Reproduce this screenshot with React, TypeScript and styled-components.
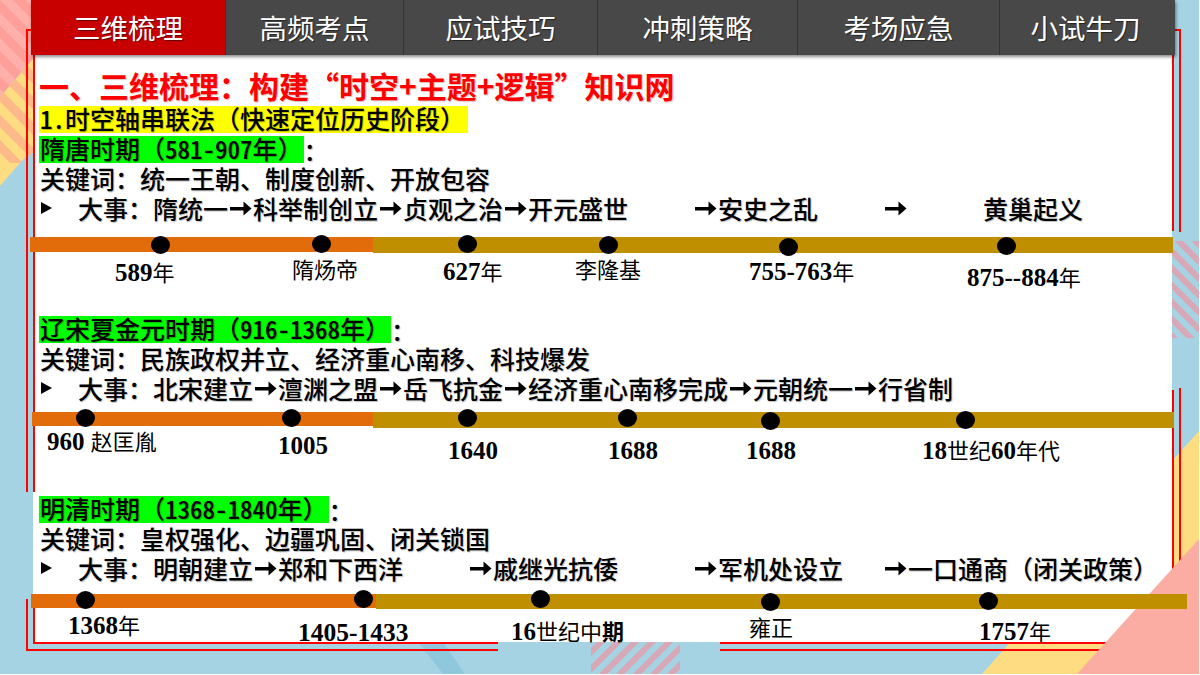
import React from "react"
import styled, { createGlobalStyle } from "styled-components"

const serifStack = `"Liberation Serif", "Noto Sans CJK SC", serif`
const sansStack = `"Noto Sans CJK SC", "Noto Sans", sans-serif`

const tabs = [
  { name: "三维梳理", width: 195, active: true },
  { name: "高频考点", width: 178 },
  { name: "应试技巧", width: 194 },
  { name: "冲刺策略", width: 200 },
  { name: "考场应急", width: 202 },
  { name: "小试牛刀", width: 175 },
]

const periods = [
  {
    heading: "隋唐时期（581-907年）",
    keywords: "关键词：统一王朝、制度创新、开放包容",
    steps: [
      { text: "隋统一", first: true },
      { text: "科举制创立" },
      { text: "贞观之治" },
      { text: "开元盛世" },
      { text: "安史之乱", before: 65 },
      { text: "黄巢起义", before: 65, after: 75 },
    ],
    track: { start: 30, orange: 343, orangeHeight: 15, gold: 800, goldHeight: 16 },
    spaceAbove: 12,
    height: 79,
    dots: [[160, 8], [321, 7], [467, 7], [608, 8], [788, 10], [1006, 9]],
    labels: [
      { x: 115, y: 36, node: <><Num>589</Num>年</> },
      { x: 292, y: 34, node: <>隋炀帝</> },
      { x: 443, y: 35, node: <><Num>627</Num>年</> },
      { x: 575, y: 34, node: <>李隆基</> },
      { x: 749, y: 35, node: <><Num>755-763</Num>年</> },
      { x: 967, y: 41, node: <><Num>875--884</Num>年</> },
    ],
  },
  {
    heading: "辽宋夏金元时期（916-1368年）",
    keywords: "关键词：民族政权并立、经济重心南移、科技爆发",
    steps: [
      { text: "北宋建立", first: true },
      { text: "澶渊之盟" },
      { text: "岳飞抗金" },
      { text: "经济重心南移完成" },
      { text: "元朝统一" },
      { text: "行省制" },
    ],
    track: { start: 32, orange: 341, orangeHeight: 14, gold: 801, goldHeight: 16 },
    spaceAbove: 7,
    height: 84,
    dots: [[85, 6], [291, 6], [467, 6], [627, 6], [770, 9], [965, 8]],
    labels: [
      { x: 47, y: 30, node: <><Num>960 </Num>赵匡胤</> },
      { x: 278, y: 34, node: <Num>1005</Num> },
      { x: 448, y: 39, node: <Num>1640</Num> },
      { x: 608, y: 39, node: <Num>1688</Num> },
      { x: 746, y: 39, node: <Num>1688</Num> },
      { x: 922, y: 39, node: <><Num>18</Num>世纪<Num>60</Num>年代</> },
    ],
  },
  {
    heading: "明清时期（1368-1840年）",
    keywords: "关键词：皇权强化、边疆巩固、闭关锁国",
    steps: [
      { text: "明朝建立", first: true },
      { text: "郑和下西洋" },
      { text: "戚继光抗倭", before: 65 },
      { text: "军机处设立", before: 75 },
      { text: "一口通商（闭关政策）", before: 40 },
    ],
    track: { start: 31, orange: 345, orangeHeight: 14, gold: 811, goldHeight: 15 },
    spaceAbove: 9,
    height: 60,
    dots: [[85, 6], [363, 5], [540, 5], [770, 8], [988, 7]],
    labels: [
      { x: 68, y: 32, node: <><Num>1368</Num>年</> },
      { x: 298, y: 39, node: <Num $size={25.5}>1405-1433</Num> },
      { x: 511, y: 38, node: <><Num>16</Num>世纪中<Num $size={22}>期</Num></> },
      { x: 749, y: 35, node: <>雍正</> },
      { x: 979, y: 38, node: <><Num>1757</Num>年</> },
    ],
  },
]

const frameLines = [
  // inner frame
  { x: 33, y: 29, w: 2, h: 463 },
  { x: 33, y: 598, w: 2, h: 45 },
  { x: 33, y: 642, w: 465, h: 2 },
  { x: 720, y: 642, w: 390, h: 2 },
  { x: 1172, y: 29, w: 2, h: 202 },
  { x: 1172, y: 390, w: 2, h: 190 },
  // outer frame
  { x: 26, y: 29, w: 2, h: 463 },
  { x: 26, y: 599, w: 2, h: 52 },
  { x: 26, y: 649, w: 472, h: 2 },
  { x: 720, y: 649, w: 385, h: 2 },
  { x: 26, y: 29, w: 1155, h: 2 },
  { x: 1179, y: 29, w: 2, h: 203 },
  { x: 1179, y: 388, w: 2, h: 175 },
]

// digits and the dot sit in half-width cells, the punctuation stays full width
const withHalfDigits = (text: string) =>
  text.split(/([0-9.\-]+)/).map((part, i) => (i % 2 ? <Half key={i}>{part}</Half> : part))

const Backdrop = () => (
  <BackdropSvg viewBox="0 0 1199 674">
    <defs>
      <pattern id="pinkStripes" width="18" height="18" patternUnits="userSpaceOnUse" patternTransform="rotate(-45)">
        <rect width="9" height="18" fill="#ffb0aa" />
      </pattern>
      <pattern id="amberStripes" width="18" height="18" patternUnits="userSpaceOnUse" patternTransform="rotate(-45)">
        <rect width="9" height="18" fill="#fdb98a" />
      </pattern>
      <pattern id="roseRight" width="12" height="12" patternUnits="userSpaceOnUse" patternTransform="rotate(-45)">
        <rect width="6" height="12" fill="#d9a8b6" />
      </pattern>
      <pattern id="roseBottom" width="12" height="12" patternUnits="userSpaceOnUse" patternTransform="rotate(45)">
        <rect width="6" height="12" fill="#d9a8b6" />
      </pattern>
    </defs>
    <polygon points="0,0 34,0 34,58 0,97" fill="#ff9f99" />
    <polygon points="0,0 34,0 34,58 0,97" fill="url(#pinkStripes)" />
    <polygon points="0,97 34,58 34,147 0,186" fill="#fedc81" />
    <polygon points="0,97 34,58 34,152 20,163 0,163" fill="url(#amberStripes)" />
    <rect x="1172" y="241" width="27" height="97" fill="url(#roseRight)" />
    <rect x="591" y="642" width="89" height="32" fill="url(#roseBottom)" />
    <polygon points="418,642 443,642 465,674 443,674" fill="#8fc8dd" />
    <polygon points="982,674 1199,431 1199,674" fill="#fedc81" />
  </BackdropSvg>
)

const Arrow = () => (
  <ArrowSvg viewBox="0 0 25 25">
    <path d="M2 11h13.500V5.500l8 7-8 7V14.500H2z" fill="#000" />
  </ArrowSvg>
)

const Period = ({ period }: { period: (typeof periods)[number] }) => (
  <>
    <HeadingRow>
      <Highlight $color="#00ff00">{withHalfDigits(period.heading)}</Highlight>：
    </HeadingRow>
    <TextRow>{period.keywords}</TextRow>
    <TextRow>
      <Marker />
      <Lead>大事：</Lead>
      {period.steps.map((step) => (
        <React.Fragment key={step.text}>
          {!step.first && <Pad $w={step.before ?? 0} />}
          {!step.first && <Arrow />}
          {step.after && <Pad $w={step.after} />}
          <span>{step.text}</span>
        </React.Fragment>
      ))}
    </TextRow>
    <Timeline $top={period.spaceAbove} $h={period.height}>
      <Track $start={period.track.start}>
        <Segment $w={period.track.orange} $h={period.track.orangeHeight} $color="#e36c0a" />
        <Segment $w={period.track.gold} $h={period.track.goldHeight} $color="#bf8f00" />
      </Track>
      {period.dots.map(([x, y]) => (
        <Dot key={x} $x={x} $y={y} />
      ))}
      {period.labels.map((label) => (
        <Label key={label.x} $x={label.x} $y={label.y}>
          {label.node}
        </Label>
      ))}
    </Timeline>
  </>
)

const App = () => (
  <Page>
    <GlobalStyle />
    <Backdrop />
    <Nav>
      {tabs.map((tab) => (
        <Tab key={tab.name} $w={tab.width} $active={tab.active}>
          {tab.name}
        </Tab>
      ))}
    </Nav>
    {frameLines.map((line) => (
      <FrameLine key={`${line.x}-${line.y}-${line.w}`} $x={line.x} $y={line.y} $w={line.w} $h={line.h} />
    ))}
    <CornerSvg viewBox="0 0 122 135">
      <polygon points="0,135 122,0 122,135" fill="#fbada3" />
    </CornerSvg>
    <Panel>
      <Content>
        <Title>一、三维梳理：构建“时空+主题+逻辑”知识网</Title>
        <HeadingRow $after={3}>
          <Highlight $color="#ffff00" $right={3}>{withHalfDigits("1.时空轴串联法（快速定位历史阶段）")}</Highlight>
        </HeadingRow>
        {periods.map((period) => (
          <Period key={period.heading} period={period} />
        ))}
      </Content>
    </Panel>
  </Page>
)

export default App

const GlobalStyle = createGlobalStyle`
  html, body {
    margin: 0;
    background: #fff;
  }
`

const Page = styled.div`
  position: relative;
  isolation: isolate;
  width: 1199px;
  height: 674px;
  overflow: hidden;
  background: #a5d3e3;
  font-family: ${sansStack};
`

const BackdropSvg = styled.svg`
  position: absolute;
  inset: 0;
  z-index: -1;
  width: 1199px;
  height: 674px;
`

const CornerSvg = styled.svg`
  position: absolute;
  right: 0;
  bottom: 0;
  z-index: 1;
  width: 122px;
  height: 135px;
`

const FrameLine = styled.div<{ $x: number; $y: number; $w: number; $h: number }>`
  position: absolute;
  z-index: 1;
  left: ${(p) => p.$x}px;
  top: ${(p) => p.$y}px;
  width: ${(p) => p.$w}px;
  height: ${(p) => p.$h}px;
  background: #ff0000;
`

const Nav = styled.nav`
  position: relative;
  z-index: 3;
  display: flex;
  width: 1144px;
  height: 55px;
  margin-left: 31px;
  box-shadow: 1px 2px 3px rgba(0, 0, 0, 0.45);
`

const Tab = styled.div<{ $w: number; $active?: boolean }>`
  display: flex;
  align-items: center;
  justify-content: center;
  box-sizing: border-box;
  width: ${(p) => p.$w}px;
  padding-bottom: 2px;
  background: ${(p) => (p.$active ? "#c80000" : "#484848")};
  border-right: 1px solid #333;
  color: #fff;
  font-family: ${serifStack};
  font-size: 27.5px;
  text-shadow: 1px 1px 1px rgba(0, 0, 0, 0.5);

  &:last-child {
    border-right: 0;
    padding-right: 4px;
  }
`

const Panel = styled.main`
  width: 1139px;
  height: 587px;
  margin-left: 33px;
  background: #fff;
`

const Content = styled.div`
  position: relative;
  z-index: 2;
  padding: 14px 0 0 6px;
  color: #000;
  font-size: 25px;
  font-weight: 500;
  line-height: 30px;
  text-shadow: 1px 1px 1px rgba(0, 0, 0, 0.25);
`

const Title = styled.h1`
  margin: 0 0 1px;
  height: 36px;
  color: #ff0000;
  font-size: 30px;
  font-weight: 700;
  line-height: 32px;
  white-space: nowrap;
  text-shadow: 1px 1px 1px rgba(120, 0, 0, 0.25);
`

const HeadingRow = styled.div<{ $after?: number }>`
  display: flex;
  align-items: center;
  height: 27px;
  margin-bottom: ${(p) => p.$after ?? 2}px;
  white-space: nowrap;
`

const Highlight = styled.span<{ $color: string; $right?: number }>`
  display: block;
  height: 27px;
  padding: 0 ${(p) => p.$right ?? 1}px 0 1px;
  background: ${(p) => p.$color};
  line-height: 25px;
`

const Half = styled.span`
  font-feature-settings: "hwid";
`

const TextRow = styled.div`
  display: flex;
  align-items: center;
  box-sizing: border-box;
  height: 30px;
  padding: 0 0 4px 1px;
  white-space: nowrap;
`

const Marker = styled.i`
  flex: none;
  width: 0;
  height: 0;
  margin: 0 26px 0 1px;
  border-left: 11px solid #000;
  border-top: 6px solid transparent;
  border-bottom: 6px solid transparent;
`

const Lead = styled.span`
  flex: none;
`

const Pad = styled.span<{ $w: number }>`
  flex: none;
  width: ${(p) => p.$w}px;
`

const ArrowSvg = styled.svg`
  flex: none;
  width: 25px;
  height: 25px;
`

const Timeline = styled.div<{ $top: number; $h: number }>`
  position: relative;
  width: 1199px;
  height: ${(p) => p.$h}px;
  margin: ${(p) => p.$top}px 0 0 -39px;
  text-shadow: none;
`

const Track = styled.div<{ $start: number }>`
  display: flex;
  align-items: flex-start;
  padding-left: ${(p) => p.$start}px;
`

const Segment = styled.div<{ $w: number; $h: number; $color: string }>`
  flex: none;
  width: ${(p) => p.$w}px;
  height: ${(p) => p.$h}px;
  background: ${(p) => p.$color};
`

const Dot = styled.span<{ $x: number; $y: number }>`
  position: absolute;
  left: ${(p) => p.$x - 9.5}px;
  top: ${(p) => p.$y - 9}px;
  width: 19px;
  height: 18px;
  border-radius: 50%;
  background: #000;
`

const Label = styled.div<{ $x: number; $y: number }>`
  position: absolute;
  left: ${(p) => p.$x}px;
  top: ${(p) => p.$y}px;
  transform: translateY(-50%);
  font-family: ${serifStack};
  font-size: 22px;
  font-weight: 400;
  line-height: 30px;
  white-space: pre;
`

function Num({ children, $size }: { children: React.ReactNode; $size?: number }) {
  return <NumText $size={$size}>{children}</NumText>
}

const NumText = styled.span<{ $size?: number }>`
  font-size: ${(p) => p.$size ?? 25}px;
  font-weight: 700;
`
